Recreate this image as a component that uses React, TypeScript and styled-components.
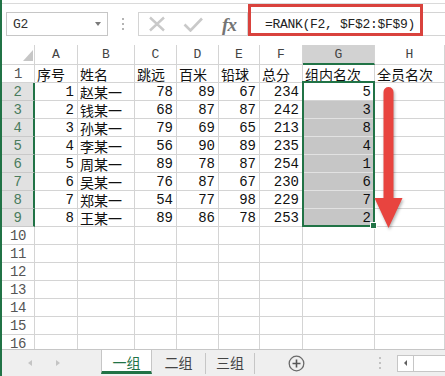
import styled, { createGlobalStyle } from 'styled-components'
import { Fragment } from 'react'

const GREEN = '#217346'
const GRID = '#d4d4d4'
const MONO = '"Liberation Mono", "DejaVu Sans Mono", monospace'
const CJK = '"Noto Sans CJK SC", "Noto Sans", sans-serif'

const GlobalStyle = createGlobalStyle`
	html, body {
		margin: 0;
		padding: 0;
		background: #fff;
	}
	body {
		overflow: hidden;
	}
`

const Frame = styled.div`
	width: 445px;
	height: 376px;
	box-sizing: border-box;
	border-left: 2px solid ${GREEN};
	display: flex;
	flex-direction: column;
	overflow: hidden;
	background: #fff;
`

// formula bar
const FormulaBar = styled.div`
	position: relative;
	flex: none;
	height: 42px;
	margin-top: 3px;
	box-sizing: border-box;
	border-top: 1px solid #dadada;
	padding: 8px 0 9px 4px;
	display: flex;
	align-items: stretch;
`

const NameBox = styled.div`
	width: 102px;
	box-sizing: border-box;
	border: 1px solid #c6c6c6;
	padding: 0 6px;
	display: flex;
	align-items: center;
	justify-content: space-between;
	font-family: ${MONO};
	font-size: 13px;
	letter-spacing: -0.3px;
	color: #333;
`

const Caret = styled.span`
	width: 0;
	height: 0;
	border-left: 3.5px solid transparent;
	border-right: 3.5px solid transparent;
	border-top: 4px solid #7a7a7a;
`

const Grip = styled.div`
	width: 30px;
	display: flex;
	flex-direction: column;
	align-items: center;
	justify-content: center;
	gap: 3px;

	span {
		width: 2px;
		height: 2px;
		background: #b4b4b4;
	}
`

const FuncBox = styled.div`
	width: 109px;
	box-sizing: border-box;
	border: 1px solid #d4d4d4;
	border-right: none;
	display: flex;
	align-items: center;
`

const FuncSlot = styled.div`
	width: 36px;
	height: 100%;
	display: flex;
	align-items: center;
	justify-content: center;
`

const Fx = styled.span`
	font-family: "Liberation Serif", "DejaVu Serif", serif;
	font-style: italic;
	font-weight: bold;
	font-size: 19px;
	line-height: 1;
	color: #747474;
	letter-spacing: -1px;
`

const FormulaInput = styled.div`
	flex: 1;
	box-sizing: border-box;
	border: 1px solid #d4d4d4;
	border-right: none;
	padding-left: 17px;
	display: flex;
	align-items: center;
	font-family: ${MONO};
	font-size: 13px;
	letter-spacing: -0.3px;
	color: #222;
	white-space: pre;
`

const Callout = styled.div`
	position: absolute;
	left: 246px;
	top: 0;
	width: 175px;
	height: 32px;
	box-sizing: border-box;
	border: 3px solid #d9423d;
	pointer-events: none;
`

// sheet grid
const Sheet = styled.div`
	flex: 1;
	min-height: 0;
	overflow: hidden;
	display: grid;
	grid-template-columns: 33px 43px 57px 42px 42px 41px 43px 72px 1fr;
	grid-template-rows: 20px;
	grid-auto-rows: 18px;
`

const Corner = styled.div`
	grid-row: 1;
	grid-column: 1;
	box-sizing: border-box;
	border-right: 1px solid ${GRID};
	border-bottom: 1px solid ${GRID};
	display: flex;
	align-items: flex-end;
	justify-content: flex-end;
	padding: 0 1px 3px 0;

	&::after {
		content: '';
		width: 0;
		height: 0;
		border-style: solid;
		border-width: 0 0 11px 10px;
		border-color: transparent transparent #c6c6c6 transparent;
	}
`

const ColHead = styled.div<{ $c: number; $active?: boolean }>`
	grid-row: 1;
	grid-column: ${p => p.$c};
	box-sizing: border-box;
	border-right: 1px solid ${GRID};
	border-bottom: ${p => (p.$active ? `2px solid ${GREEN}` : `1px solid ${GRID}`)};
	background: ${p => (p.$active ? '#d2d2d2' : '#fff')};
	display: flex;
	align-items: flex-end;
	justify-content: center;
	padding-bottom: ${p => (p.$active ? '2px' : '3px')};
	font-family: ${MONO};
	font-size: 13px;
	line-height: 13px;
	color: #444;
`

const RowHead = styled.div<{ $r: number; $active?: boolean }>`
	grid-row: ${p => p.$r};
	grid-column: 1;
	box-sizing: border-box;
	border-bottom: 1px solid ${p => (p.$active ? '#c9c9c9' : GRID)};
	border-right: ${p => (p.$active ? `2px solid ${GREEN}` : `1px solid ${GRID}`)};
	background: ${p => (p.$active ? '#e1e1e1' : '#fff')};
	color: ${p => (p.$active ? '#4a7c5d' : '#555')};
	display: flex;
	align-items: center;
	justify-content: center;
	font-family: ${MONO};
	font-size: 14px;
	line-height: 14px;
	letter-spacing: -0.5px;
`

const Cell = styled.div<{ $r: number; $c: number; $num?: boolean; $sel?: boolean }>`
	grid-row: ${p => p.$r};
	grid-column: ${p => p.$c};
	min-width: 0;
	box-sizing: border-box;
	border-right: 1px solid ${GRID};
	border-bottom: 1px solid ${p => (p.$sel ? '#e2e2e2' : GRID)};
	background: ${p => (p.$sel ? '#c6c6c6' : '#fff')};
	display: flex;
	align-items: center;
	justify-content: ${p => (p.$num ? 'flex-end' : 'flex-start')};
	padding: 1px 3px 0 2px;
	font-family: ${p => (p.$num ? MONO : CJK)};
	font-size: 14px;
	line-height: 14px;
	color: #111;
	white-space: nowrap;
`

const Selection = styled.div`
	grid-row: 3 / span 8;
	grid-column: 8;
	margin: -2px 0 0 -1px;
	border: 2px solid ${GREEN};
	position: relative;
	z-index: 2;
	pointer-events: none;
`

const FillHandle = styled.span`
	position: absolute;
	right: -4px;
	bottom: -4px;
	width: 5px;
	height: 5px;
	background: ${GREEN};
	border: 1px solid #fff;
`

const Arrow = styled.svg`
	grid-row: 3 / span 8;
	grid-column: 9;
	align-self: start;
	overflow: visible;
	z-index: 3;
	filter: drop-shadow(1px 2px 1.5px rgba(0, 0, 0, 0.3));
	pointer-events: none;
`

// sheet tabs
const TabBar = styled.div`
	flex: none;
	height: 27px;
	box-sizing: border-box;
	border-top: 1px solid #c6c6c6;
	background: #efefef;
	display: flex;
	align-items: center;
`

const Nav = styled.div`
	width: 99px;
	align-self: stretch;
	padding-left: 14px;
	box-sizing: border-box;
	display: flex;
	align-items: center;
`

const NavButton = styled.span<{ $dir: 'left' | 'right' }>`
	width: 28px;
	display: flex;
	justify-content: center;

	&::before {
		content: '';
		width: 0;
		height: 0;
		border-top: 3.5px solid transparent;
		border-bottom: 3.5px solid transparent;
		${p => (p.$dir === 'left' ? 'border-right: 4px solid #c4c4c4;' : 'border-left: 4px solid #c4c4c4;')}
	}
`

const Tab = styled.div<{ $active?: boolean; $w: number }>`
	width: ${p => p.$w}px;
	box-sizing: border-box;
	align-self: flex-start;
	height: 24px;
	display: flex;
	align-items: center;
	justify-content: center;
	font-family: ${CJK};
	font-size: 14px;
	line-height: 14px;
	color: ${p => (p.$active ? GREEN : '#444')};
	background: ${p => (p.$active ? '#fff' : 'transparent')};
	border-left: ${p => (p.$active ? '1px solid #c6c6c6' : 'none')};
	border-right: ${p => (p.$active ? '1px solid #c6c6c6' : 'none')};
	border-bottom: 3px solid ${p => (p.$active ? GREEN : 'transparent')};
	padding-top: 2px;
`

const TabSep = styled.span`
	width: 1px;
	height: 21px;
	background: #c6c6c6;
`

const AddSheet = styled.svg`
	margin-left: 33px;
	flex: none;
`

const BarGrip = styled(Grip)`
	width: 4px;
	margin-left: 73px;
	gap: 3px;

	span {
		background: #c2c2c2;
	}
`

const HScroll = styled.div`
	margin-left: 15px;
	flex: 1;
	height: 17px;
	box-sizing: border-box;
	border: 1px solid #c6c6c6;
	border-right: none;
	background: #fff;
	display: flex;
`

const ScrollButton = styled.span`
	width: 15px;
	border-right: 1px solid #c6c6c6;
	display: flex;
	align-items: center;
	justify-content: center;

	&::before {
		content: '';
		width: 0;
		height: 0;
		border-top: 3px solid transparent;
		border-bottom: 3px solid transparent;
		border-right: 3px solid #606060;
	}
`

const COLS = ['A', 'B', 'C', 'D', 'E', 'F', 'G', 'H']
const HEADERS = ['序号', '姓名', '跳远', '百米', '铅球', '总分', '组内名次', '全员名次']
const DATA: [number, string, number, number, number, number, number][] = [
	[1, '赵某一', 78, 89, 67, 234, 5],
	[2, '钱某一', 68, 87, 87, 242, 3],
	[3, '孙某一', 79, 69, 65, 213, 8],
	[4, '李某一', 56, 90, 89, 235, 4],
	[5, '周某一', 89, 78, 87, 254, 1],
	[6, '吴某一', 76, 87, 67, 230, 6],
	[7, '郑某一', 54, 77, 98, 229, 7],
	[8, '王某一', 89, 86, 78, 253, 2],
]

const renderRow = (n: number) => {
	const r = n + 1
	if (n === 1) {
		return HEADERS.map((h, i) => (
			<Cell key={i} $r={r} $c={i + 2}>{h}</Cell>
		))
	}
	const rec = DATA[n - 2]
	if (!rec) {
		return COLS.map((_, i) => <Cell key={i} $r={r} $c={i + 2} />)
	}
	return [
		...rec.map((v, i) => (
			<Cell key={i} $r={r} $c={i + 2} $num={typeof v === 'number'} $sel={i === 6 && n > 2}>
				{v}
			</Cell>
		)),
		<Cell key="h" $r={r} $c={9} />,
	]
}

export default function App() {
	return (
		<>
			<GlobalStyle />
			<Frame>
				<FormulaBar>
					<NameBox>
						G2
						<Caret />
					</NameBox>
					<Grip>
						<span />
						<span />
						<span />
					</Grip>
					<FuncBox>
						<FuncSlot>
							<svg width="18" height="16" viewBox="0 0 18 16">
								<path d="M2 1.5 L16 14.5 M16 1.5 L2 14.5" stroke="#c9c9c9" strokeWidth="2.4" fill="none" />
							</svg>
						</FuncSlot>
						<FuncSlot>
							<svg width="20" height="15" viewBox="0 0 20 15">
								<path d="M1.5 7.5 L7.5 13.5 L19 1.5" stroke="#c9c9c9" strokeWidth="2.6" fill="none" />
							</svg>
						</FuncSlot>
						<FuncSlot>
							<Fx>fx</Fx>
						</FuncSlot>
					</FuncBox>
					<FormulaInput>=RANK(F2, $F$2:$F$9)</FormulaInput>
					<Callout />
				</FormulaBar>

				<Sheet>
					<Corner />
					{COLS.map((c, i) => (
						<ColHead key={c} $c={i + 2} $active={c === 'G'}>
							{c}
						</ColHead>
					))}
					{Array.from({ length: 16 }, (_, i) => {
						const n = i + 1
						return (
							<Fragment key={n}>
								<RowHead $r={n + 1} $active={n >= 2 && n <= 9}>
									{n}
								</RowHead>
								{renderRow(n)}
							</Fragment>
						)
					})}
					<Selection>
						<FillHandle />
					</Selection>
					<Arrow width="30" height="150" viewBox="0 0 30 150">
						<path
							d="M8.5 9 A5 5 0 0 1 18.5 9 L18.5 115 L27.5 115 L13.5 145 L-0.5 115 L8.5 115 Z"
							fill="#e8443f"
						/>
					</Arrow>
				</Sheet>

				<TabBar>
					<Nav>
						<NavButton $dir="left" />
						<NavButton $dir="right" />
					</Nav>
					<Tab $active $w={51}>一组</Tab>
					<Tab $w={53}>二组</Tab>
					<TabSep />
					<Tab $w={48}>三组</Tab>
					<TabSep />
					<AddSheet width="17" height="17" viewBox="0 0 17 17">
						<circle cx="8.5" cy="8.5" r="7.3" stroke="#6a6a6a" strokeWidth="1.3" fill="none" />
						<path d="M8.5 4.5 V12.5 M4.5 8.5 H12.5" stroke="#555" strokeWidth="1.6" />
					</AddSheet>
					<BarGrip>
						<span />
						<span />
						<span />
					</BarGrip>
					<HScroll>
						<ScrollButton />
					</HScroll>
				</TabBar>
			</Frame>
		</>
	)
}
